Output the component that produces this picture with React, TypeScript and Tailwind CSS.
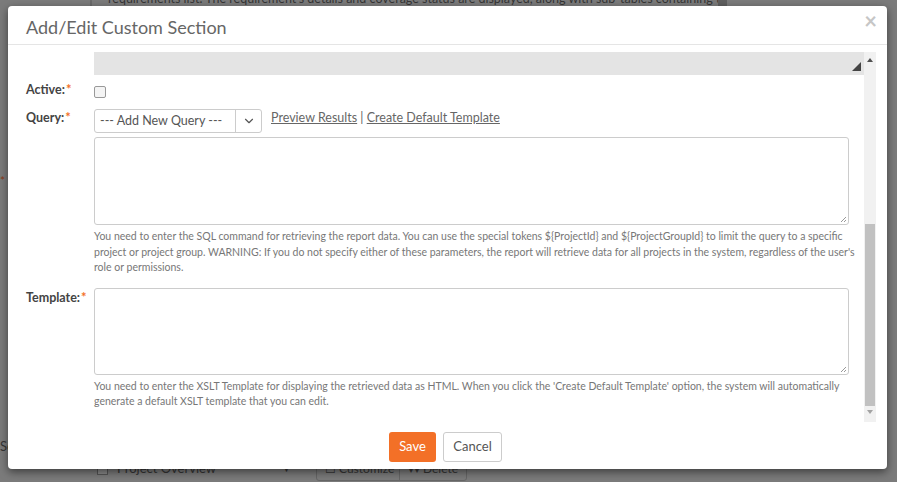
import { ChevronDown } from "lucide-react";

const font = { fontFamily: "Lato, 'Open Sans', sans-serif" };

function Req() {
  return <sup className="text-[#f37027] text-[13px] font-bold relative top-[0px] ml-px">*</sup>;
}

function Label({ children }: { children: string }) {
  return (
    <div className="w-[68px] shrink-0 text-[12.5px] font-bold text-[#444]">
      {children}
      <Req />
    </div>
  );
}

function TextArea({ h }: { h: string }) {
  return (
    <div className={`relative w-[755px] ${h} rounded-[3px] border border-[#ccc] bg-white`}>
      <svg className="absolute right-[1px] bottom-[1px]" width="7" height="7" viewBox="0 0 7 7">
        <path d="M6 1 L1 6 M6 4 L4 6" stroke="#999" strokeWidth="1" />
      </svg>
    </div>
  );
}

export default function App() {
  return (
    <div className="relative w-[897px] h-[482px] overflow-hidden bg-[#7b7b7b]" style={font}>
      {/* page behind the overlay */}
      <div className="flex h-full flex-col justify-between text-[#353535]">
        <div className="flex items-start">
          <div className="ml-[90px] h-[10px] w-[2px] bg-[#6a6a6a]" />
          <div className="ml-[16px] -mt-[10px] text-[12.5px] whitespace-nowrap w-[610px] overflow-hidden">
            requirements list. The requirement's details and coverage status are displayed, along with sub-tables containing the
          </div>
          <div className="h-[15px] w-[9px] bg-[#5f5f5f]" />
        </div>
        <div className="flex items-center h-[24px] text-[13px] mb-[1px]">
          <div className="ml-[97px] h-[12px] w-[11px] border border-[#555] bg-[#8a8a8a]" />
          <span className="ml-[9px] w-[165px] whitespace-nowrap">Project Overview</span>
          <span className="text-[9px]">▼</span>
          <div className="ml-[25px] flex h-[24px] border border-[#666] rounded-[3px] whitespace-nowrap text-[12px] leading-[22px]">
            <span className="w-[83px] pl-[8px] border-r border-[#666]">☐ Customize</span>
            <span className="w-[66px] pl-[8px]">▾▾ Delete</span>
          </div>
        </div>
      </div>
      <span className="absolute left-0 top-[437px] text-[13px] text-[#353535]">Se</span>
      <span className="absolute left-[0px] top-[172px] text-[12px] text-[#8a3a14]">*</span>

      {/* dialog */}
      <div className="absolute left-[8px] top-[6px] w-[879px] h-[463px] bg-white rounded-[4px] shadow-[0_3px_9px_rgba(0,0,0,0.5)] flex flex-col">
        <div className="h-[39px] shrink-0 border-b border-[#e5e5e5] flex items-center justify-between pl-[18px] pr-[10px]">
          <h4 className="text-[18px] text-[#666] pt-[4px]">Add/Edit Custom Section</h4>
          <span className="text-[22px] font-bold text-[#c6c6c6] leading-none -mt-[8px]">×</span>
        </div>

        <div className="flex pt-[7px] pr-[11px] h-[378px] shrink-0">
          <div className="flex-1 h-[370px] overflow-hidden pl-[18px]">
            <div className="ml-[68px] h-[23px] bg-[#e4e4e4] relative">
              <svg className="absolute right-[3px] bottom-[4px]" width="9" height="9" viewBox="0 0 9 9">
                <path d="M9 0 L9 9 L0 9 Z" fill="#444" />
              </svg>
            </div>

            <div className="flex mt-[6px] h-[20px]">
              <Label>Active:</Label>
              <div className="mt-[5px] h-[12px] w-[12px] rounded-[2px] border border-[#999] bg-[#f4f4f4]" />
            </div>

            <div className="flex mt-[8px]">
              <div>
                <Label>Query:</Label>
              </div>
              <div>
                <div className="flex items-center">
                  <div className="flex h-[24px] w-[168px] rounded-[3px] border border-[#ccc]">
                    <span className="flex-1 pl-[5px] text-[12.5px] text-[#555] leading-[22px]">--- Add New Query ---</span>
                    <span className="w-[26px] border-l border-[#ccc] flex items-center justify-center">
                      <ChevronDown size={14} strokeWidth={2} className="text-[#555]" />
                    </span>
                  </div>
                  <div className="ml-[9px] text-[12.5px] text-[#666] -mt-[5px]">
                    <span className="underline">Preview Results</span> | <span className="underline">Create Default Template</span>
                  </div>
                </div>
                <div className="mt-[4px]">
                  <TextArea h="h-[88px]" />
                </div>
                <p className="w-[768px] mt-[4px] text-[10.5px] leading-[15.5px] text-[#777]">
                  You need to enter the SQL command for retrieving the report data. You can use the special tokens ${"{ProjectId}"} and ${"{ProjectGroupId}"} to limit the query to a specific project or project group. WARNING: If you do not specify either of these parameters, the report will retrieve data for all projects in the system, regardless of the user's role or permissions.
                </p>
              </div>
            </div>

            <div className="flex mt-[12px]">
              <div className="pt-[1px]">
                <Label>Template:</Label>
              </div>
              <div>
                <TextArea h="h-[87px]" />
                <p className="w-[768px] mt-[4px] text-[10.5px] leading-[15.5px] text-[#777]">
                  You need to enter the XSLT Template for displaying the retrieved data as HTML. When you click the 'Create Default Template' option, the system will automatically generate a default XSLT template that you can edit.
                </p>
              </div>
            </div>
          </div>

          {/* scrollbar */}
          <div className="w-[12px] h-[370px] bg-[#f1f1f1] flex flex-col items-center">
            <span className="mt-[6px] h-0 w-0 border-x-[3px] border-x-transparent border-b-[4px] border-b-[#505050]" />
            <div className="mt-[162px] h-[182px] w-[10px] bg-[#c1c1c1]" />
            <span className="mt-[4px] h-0 w-0 border-x-[3px] border-x-transparent border-t-[4px] border-t-[#a3a3a3]" />
          </div>
        </div>

        <div className="flex justify-center gap-[7px] pt-[9px] pr-[4px]">
          <button className="h-[30px] w-[47px] rounded-[3px] bg-[#f37027] text-white text-[13px]">Save</button>
          <button className="h-[30px] w-[59px] rounded-[3px] border border-[#ccc] bg-white text-[#555] text-[13px]">Cancel</button>
        </div>
      </div>
    </div>
  );
}
